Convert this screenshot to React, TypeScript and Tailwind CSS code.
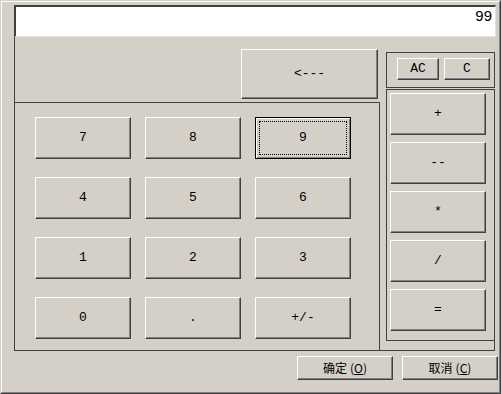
import React from "react";

const raised =
  "flex items-center justify-center bg-[#d4d0c8] text-black border border-t-white border-l-white border-r-[#404040] border-b-[#404040] shadow-[inset_-1px_-1px_0_#808080]";

const mono = "font-['Liberation_Mono','DejaVu_Sans_Mono',monospace] text-[13px]";

function Key({
  label,
  className = "",
  focused = false,
}: {
  label: React.ReactNode;
  className?: string;
  focused?: boolean;
}) {
  if (focused) {
    return (
      <button
        className={`relative flex items-center justify-center bg-[#d4d0c8] text-black border border-black shadow-[inset_1px_1px_0_#ffffff,inset_-1px_-1px_0_#808080] ${mono} ${className}`}
      >
        <span className="absolute inset-[3px] border border-dotted border-black" />
        {label}
      </button>
    );
  }
  return <button className={`${raised} ${mono} ${className}`}>{label}</button>;
}

export default function App() {
  const digits = ["7", "8", "9", "4", "5", "6", "1", "2", "3", "0", ".", "+/-"];
  const ops = ["+", "--", "*", "/", "="];

  return (
    <div className="w-[501px] h-[394px] bg-[#d4d0c8] border border-t-[#d4d0c8] border-l-[#d4d0c8] border-r-[#404040] border-b-[#404040]">
      <div className="w-full h-full flex flex-col border border-t-white border-l-white border-r-[#808080] border-b-[#808080]">
        {/* display */}
        <div className="ml-[12px] mt-[3px] w-[482px] h-[32px] bg-white border-t-2 border-l-2 border-t-[#404040] border-l-[#404040] border-r border-b border-r-[#e4e2dc] border-b-[#e4e2dc] flex justify-end pr-[3px]">
          <span className="font-['Liberation_Sans',Arial,sans-serif] text-[15px] leading-[17px] text-black">
            99
          </span>
        </div>

        {/* main frame */}
        <div className="ml-[12px] w-[481px] h-[314px] flex border-l border-b border-[#404040]">
          <div className="w-[365px] flex flex-col">
            <div className="h-[66px] border-b border-[#404040] pl-[226px] pt-[12px]">
              <Key label="<---" className="w-[137px] h-[50px]" />
            </div>
            <div className="flex-1 border-r border-[#404040] pl-[20px] pt-[14px]">
              <div className="grid grid-cols-[96px_96px_96px] gap-x-[14px] gap-y-[18px]">
                {digits.map((d) => (
                  <Key key={d} label={d} focused={d === "9"} className="h-[42px]" />
                ))}
              </div>
            </div>
          </div>

          <div className="w-[115px] flex flex-col">
            <div className="ml-[6px] mt-[15px] w-[109px] h-[36px] border border-[#404040] flex pl-[10px] pt-[5px] gap-[5px]">
              <Key label="AC" className="w-[42px] h-[22px]" />
              <Key label="C" className="w-[46px] h-[22px]" />
            </div>
            <div className="ml-[6px] mt-[1px] w-[109px] h-[252px] border border-[#404040] flex flex-col gap-[7px] pl-[3px] pt-[3px]">
              {ops.map((o) => (
                <Key key={o} label={o} className="w-[96px] h-[42px]" />
              ))}
            </div>
            <div className="h-[9px] border-r border-[#404040]" />
          </div>
        </div>

        {/* dialog buttons */}
        <div className="flex justify-end gap-[9px] pr-[1px] mt-[5px]">
          {[
            ["确定", "O"],
            ["取消", "C"],
          ].map(([t, k]) => (
            <button
              key={t}
              className={`${raised} w-[96px] h-[24px] font-['Noto_Sans_CJK_SC',sans-serif] text-[12px] leading-none`}
            >
              {t}
              <span className="ml-[3px]">
                (<span className="underline">{k}</span>)
              </span>
            </button>
          ))}
        </div>
      </div>
    </div>
  );
}
